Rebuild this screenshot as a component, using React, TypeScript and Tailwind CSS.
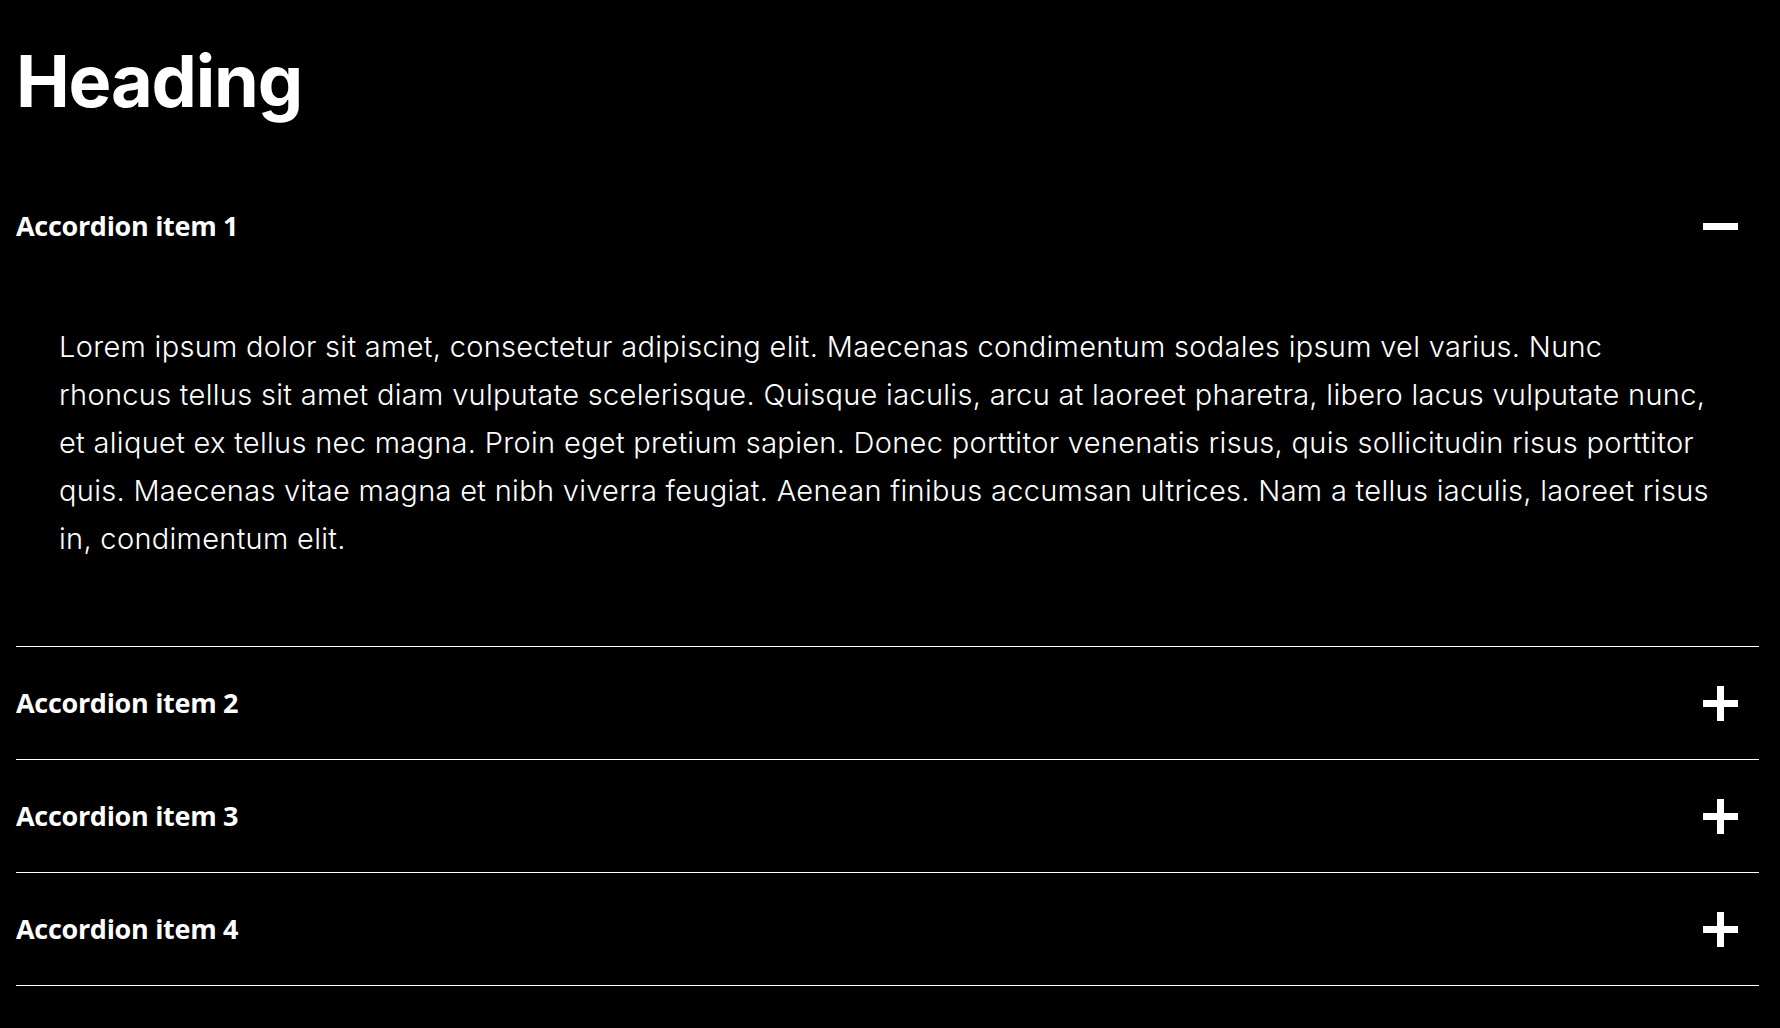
import React, { useState } from "react";

const items = [
  {
    title: "Accordion item 1",
    body: "Lorem ipsum dolor sit amet, consectetur adipiscing elit. Maecenas condimentum sodales ipsum vel varius. Nunc rhoncus tellus sit amet diam vulputate scelerisque. Quisque iaculis, arcu at laoreet pharetra, libero lacus vulputate nunc, et aliquet ex tellus nec magna. Proin eget pretium sapien. Donec porttitor venenatis risus, quis sollicitudin risus porttitor quis. Maecenas vitae magna et nibh viverra feugiat. Aenean finibus accumsan ultrices. Nam a tellus iaculis, laoreet risus in, condimentum elit.",
  },
  {
    title: "Accordion item 2",
    body: "Lorem ipsum dolor sit amet, consectetur adipiscing elit. Maecenas condimentum sodales ipsum vel varius.",
  },
  {
    title: "Accordion item 3",
    body: "Lorem ipsum dolor sit amet, consectetur adipiscing elit. Maecenas condimentum sodales ipsum vel varius.",
  },
  {
    title: "Accordion item 4",
    body: "Lorem ipsum dolor sit amet, consectetur adipiscing elit. Maecenas condimentum sodales ipsum vel varius.",
  },
];

const Toggle = ({ open }: { open: boolean }) => (
  <span className="relative block w-[35px] h-[35px]">
    <span className="absolute left-0 top-[14px] w-[35px] h-[7px] bg-white" />
    {!open && <span className="absolute top-0 left-[14px] w-[7px] h-[35px] bg-white" />}
  </span>
);

const App = () => {
  const [openIndex, setOpenIndex] = useState<number | null>(0);

  return (
    <div className="min-h-screen bg-black text-white pl-4 pr-[21px] pt-[45px] pb-10">
      <h1 className="font-['Inter',sans-serif] font-bold text-[72px] leading-none tracking-[-1.2px]">
        Heading
      </h1>
      <div className="mt-[53px]">
        {items.map((item, i) => {
          const open = openIndex === i;
          return (
            <div key={item.title} className="border-b border-white">
              <button
                onClick={() => setOpenIndex(open ? null : i)}
                className="w-full h-[112px] flex items-center justify-between text-left cursor-pointer"
              >
                <span className="font-['Open_Sans',sans-serif] font-bold text-[27px] tracking-[-0.3px]">
                  {item.title}
                </span>
                <span className="mr-[21px]">
                  <Toggle open={open} />
                </span>
              </button>
              {open && (
                <div className="px-[43px] pt-[41px] pb-[83px]">
                  <p className="font-['Inter',sans-serif] font-light text-[29px] leading-[48px] tracking-[0.3px]">
                    {item.body}
                  </p>
                </div>
              )}
            </div>
          );
        })}
      </div>
    </div>
  );
};

export default App;
